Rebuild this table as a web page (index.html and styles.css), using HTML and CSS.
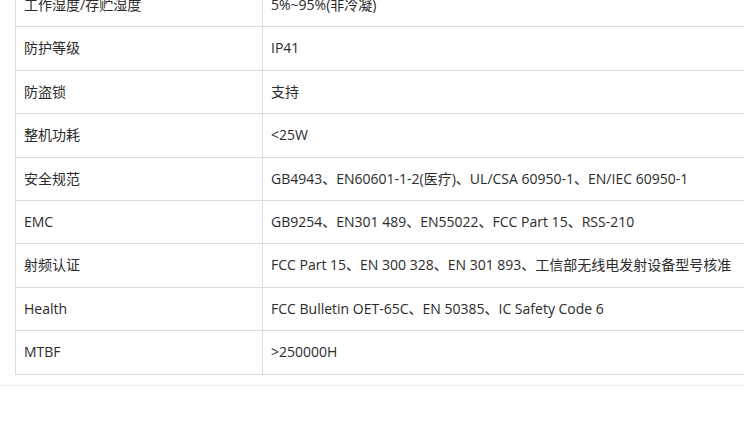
FILE: index.html
```html
<!DOCTYPE html>
<html lang="zh-CN">
<head>
  <meta charset="UTF-8">
  <title>技术参数</title>
  <link rel="stylesheet" href="styles.css">
</head>
<body>
  <div class="spec">
    <table class="spec-table">
      <tr><td class="name">工作湿度/存贮湿度</td><td>5%~95%(非冷凝)</td></tr>
      <tr><td class="name">防护等级</td><td>IP41</td></tr>
      <tr><td class="name">防盗锁</td><td>支持</td></tr>
      <tr><td class="name">整机功耗</td><td>&lt;25W</td></tr>
      <tr><td class="name">安全规范</td><td>GB4943、EN60601-1-2(医疗)、UL/CSA 60950-1、EN/IEC 60950-1</td></tr>
      <tr><td class="name">EMC</td><td>GB9254、EN301 489、EN55022、FCC Part 15、RSS-210</td></tr>
      <tr><td class="name">射频认证</td><td>FCC Part 15、EN 300 328、EN 301 893、工信部无线电发射设备型号核准</td></tr>
      <tr><td class="name">Health</td><td>FCC Bulletin OET-65C、EN 50385、IC Safety Code 6</td></tr>
      <tr><td class="name">MTBF</td><td>&gt;250000H</td></tr>
    </table>
    <div class="spec-foot"></div>
  </div>
</body>
</html>
```

FILE: styles.css
```css
body {
  margin: 0;
  padding: 0;
  background-color: #fff;
  font-family: "Open Sans", "Noto Sans CJK SC", sans-serif;
  color: #2b2b2b;
  overflow: hidden;
}

.spec {
  width: 744px;
  margin-top: -17px;
}

.spec-table {
  border-collapse: collapse;
  width: 729px;
  margin-left: 15px;
  font-size: 14px;
}

.spec-table td {
  border: 1px solid #ddd;
  border-right: none;
  padding: 12px 8px;
  line-height: 18.4px;
  text-align: left;
  vertical-align: middle;
}

.spec-table td.name {
  width: 230px;
}

.spec-foot {
  height: 10px;
  border-bottom: 1px solid #ececec;
}
```
